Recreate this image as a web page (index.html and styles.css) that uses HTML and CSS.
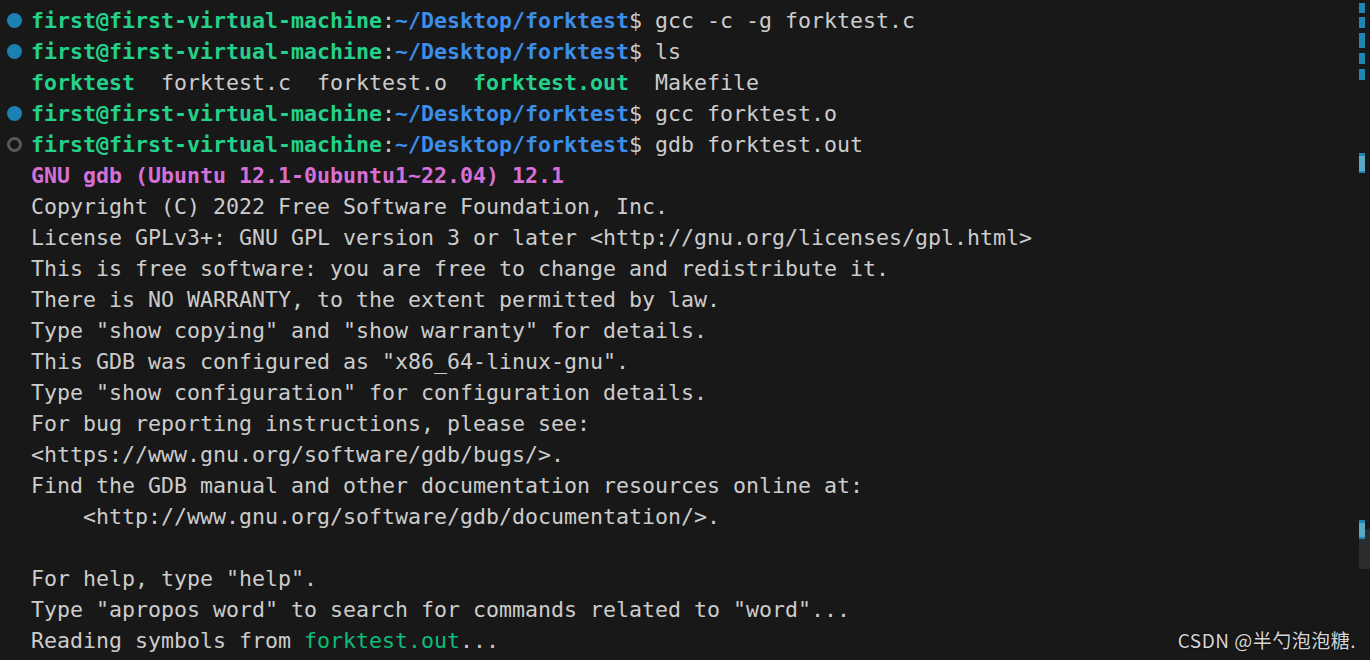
FILE: index.html
```html
<html>
<head>
    <meta name="viewport" content="width=device-width">
    <title>Terminal</title>
    <link rel="stylesheet" href="styles.css">
</head>
<body>

<div class="terminal">
    <div class="rows">
        <div class="row"><span class="mark done"></span><span class="line"><b class="g">first@first-virtual-machine</b>:<b class="b">~/Desktop/forktest</b>$ gcc -c -g forktest.c</span></div>
        <div class="row"><span class="mark done"></span><span class="line"><b class="g">first@first-virtual-machine</b>:<b class="b">~/Desktop/forktest</b>$ ls</span></div>
        <div class="row"><span class="mark"></span><span class="line"><b class="g">forktest</b>  forktest.c  forktest.o  <b class="g">forktest.out</b>  Makefile</span></div>
        <div class="row"><span class="mark done"></span><span class="line"><b class="g">first@first-virtual-machine</b>:<b class="b">~/Desktop/forktest</b>$ gcc forktest.o</span></div>
        <div class="row"><span class="mark running"></span><span class="line"><b class="g">first@first-virtual-machine</b>:<b class="b">~/Desktop/forktest</b>$ gdb forktest.out</span></div>
        <div class="row"><span class="mark"></span><span class="line"><b class="m">GNU gdb (Ubuntu 12.1-0ubuntu1~22.04) 12.1</b></span></div>
        <div class="row"><span class="mark"></span><span class="line">Copyright (C) 2022 Free Software Foundation, Inc.</span></div>
        <div class="row"><span class="mark"></span><span class="line">License GPLv3+: GNU GPL version 3 or later &lt;http://gnu.org/licenses/gpl.html&gt;</span></div>
        <div class="row"><span class="mark"></span><span class="line">This is free software: you are free to change and redistribute it.</span></div>
        <div class="row"><span class="mark"></span><span class="line">There is NO WARRANTY, to the extent permitted by law.</span></div>
        <div class="row"><span class="mark"></span><span class="line">Type "show copying" and "show warranty" for details.</span></div>
        <div class="row"><span class="mark"></span><span class="line">This GDB was configured as "x86_64-linux-gnu".</span></div>
        <div class="row"><span class="mark"></span><span class="line">Type "show configuration" for configuration details.</span></div>
        <div class="row"><span class="mark"></span><span class="line">For bug reporting instructions, please see:</span></div>
        <div class="row"><span class="mark"></span><span class="line">&lt;https://www.gnu.org/software/gdb/bugs/&gt;.</span></div>
        <div class="row"><span class="mark"></span><span class="line">Find the GDB manual and other documentation resources online at:</span></div>
        <div class="row"><span class="mark"></span><span class="line">    &lt;http://www.gnu.org/software/gdb/documentation/&gt;.</span></div>
        <div class="row"><span class="mark"></span><span class="line"> </span></div>
        <div class="row"><span class="mark"></span><span class="line">For help, type "help".</span></div>
        <div class="row"><span class="mark"></span><span class="line">Type "apropos word" to search for commands related to "word"...</span></div>
        <div class="row"><span class="mark"></span><span class="line">Reading symbols from <span class="gn">forktest.out</span>...</span></div>
    </div>

    <div class="ruler">
        <div class="tick t1"></div>
        <div class="tick t2"></div>
        <div class="tick t3"></div>
        <div class="tick t4"></div>
        <div class="tick t5"></div>
        <div class="tick hl t6"></div>
        <div class="slider"></div>
        <div class="tick hl t7"></div>
    </div>

    <div class="watermark">CSDN @半勺泡泡糖.</div>
</div>

</body>
</html>
```

FILE: styles.css
```css
body {
    margin: 0;
    padding: 0;
    overflow: hidden;
    background: #181818;
}

.terminal {
    position: relative;
    height: 660px;
    overflow: hidden;
    font-family: "DejaVu Sans Mono", "Liberation Mono", monospace;
    font-size: 21.6px;
    color: #cccccc;
}

.rows {
    padding-top: 5px;
}

.row {
    display: flex;
    align-items: center;
    height: 31px;
}

.mark {
    width: 15px;
    height: 15px;
    margin: 0 9px 0 7px;
    border-radius: 50%;
    box-sizing: border-box;
    flex: none;
}

.mark.done {
    background: #1b80b2;
}

.mark.running {
    border: 3px solid #585858;
}

.line {
    white-space: pre;
    line-height: 31px;
}

b {
    font-weight: bold;
}

.g {
    color: #23d18b;
}

.b {
    color: #3b8eea;
}

.m {
    color: #d670d6;
}

.gn {
    color: #0dbc79;
}

/* overview ruler on the right edge */
.ruler {
    position: absolute;
    top: 0;
    right: 0;
    width: 11px;
    height: 660px;
}

.tick {
    position: absolute;
    left: 0;
    width: 6px;
    background: #1f86b3;
}

.tick.hl {
    background: #5aa9c9;
    border-top: 3px solid #1f86b3;
    border-bottom: 2px solid #1f86b3;
    box-sizing: border-box;
}

.t1 { top: 3px; height: 10px; }
.t2 { top: 17px; height: 11px; }
.t3 { top: 33px; height: 15px; }
.t4 { top: 53px; height: 11px; }
.t5 { top: 69px; height: 11px; }
.t6 { top: 153px; height: 20px; }
.t7 { top: 520px; height: 19px; border-bottom-color: #6b7278; border-top-width: 9px; }

.slider {
    position: absolute;
    top: 529px;
    left: 0;
    width: 11px;
    height: 40px;
    background: #2b2c2e;
}

.watermark {
    position: absolute;
    right: 14px;
    bottom: 7px;
    font-family: "Noto Sans CJK SC", "Noto Sans", sans-serif;
    font-size: 19px;
    letter-spacing: 0.5px;
    color: #d6d6d6;
    text-shadow: 0 0 2px #000;
}
```
